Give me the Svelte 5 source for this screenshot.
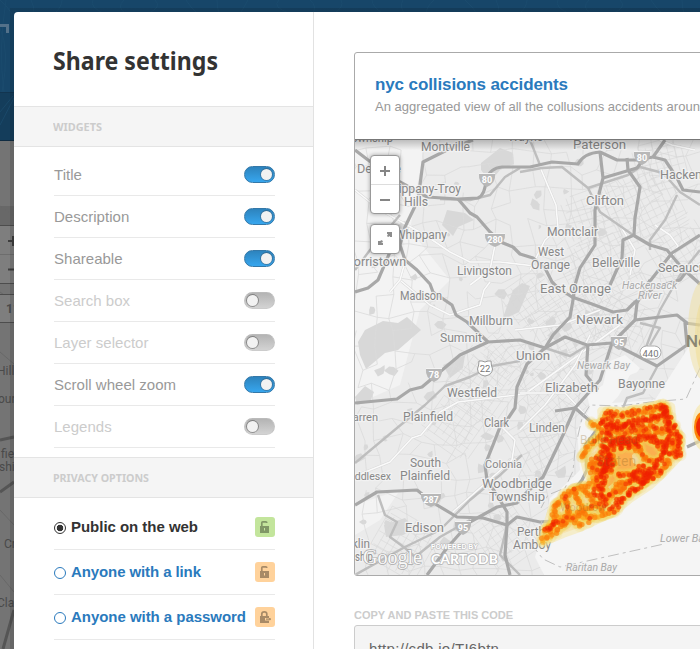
<script>
  const widgets = [
    { name: 'Title', on: true },
    { name: 'Description', on: true },
    { name: 'Shareable', on: true },
    { name: 'Search box', on: false },
    { name: 'Layer selector', on: false },
    { name: 'Scroll wheel zoom', on: true },
    { name: 'Legends', on: false }
  ];
  const options = [
    { name: 'Public on the web', width: 127, selected: true, color: '#c3e59c', lock: 'open' },
    { name: 'Anyone with a link', width: 130, selected: false, color: '#ffd29b', lock: 'open' },
    { name: 'Anyone with a password', width: 175, selected: false, color: '#ffd29b', lock: 'key' }
  ];

  // Small seeded generator so streets and accidents are the same on each load.
  let seed = 7;
  function rnd() {
    seed = (seed * 16807) % 2147483647;
    return seed / 2147483647;
  }

  function makeStreets() {
    const out = [];
    const cols = 21, rows = 26;
    const pts = [];
    for (let j = 0; j <= rows; j++) {
      pts.push([]);
      for (let i = 0; i <= cols; i++) {
        pts[j].push([348 + i * 18 + j * 0.8 + (rnd() - 0.5) * 13, 134 + j * 18 + (rnd() - 0.5) * 13]);
      }
    }
    for (let j = 0; j < rows; j++) {
      for (let i = 0; i < cols; i++) {
        const a = pts[j][i], b = pts[j][i + 1], c = pts[j + 1][i];
        if (rnd() < 0.78) out.push(`M${a[0].toFixed(1)} ${a[1].toFixed(1)}L${b[0].toFixed(1)} ${b[1].toFixed(1)}`);
        if (rnd() < 0.78) out.push(`M${a[0].toFixed(1)} ${a[1].toFixed(1)}L${c[0].toFixed(1)} ${c[1].toFixed(1)}`);
      }
    }
    return out.join('');
  }

  // Dense diagonal town grids: centre x, centre y, half size, angle.
  function makeGrids() {
    const towns = [
      [570, 330, 38, 60], [600, 270, 36, 62], [640, 205, 38, 64], [552, 395, 32, 48], [480, 385, 34, 35],
      [620, 325, 28, 28], [590, 215, 25, 70], [530, 300, 26, 55], [455, 425, 30, 35], [505, 535, 30, 55],
      [540, 445, 28, 60], [400, 545, 30, 30], [680, 250, 28, 58], [505, 355, 25, 50], [660, 165, 25, 75]
    ];
    const out = [];
    for (const [cx, cy, size, deg] of towns) {
      const r = (deg * Math.PI) / 180;
      for (const turn of [0, Math.PI / 2]) {
        const c = Math.cos(r + turn), s = Math.sin(r + turn);
        for (let k = -size; k <= size; k += 7) {
          const l = size * (0.5 + rnd() * 0.5);
          const x = cx - s * k, y = cy + c * k;
          out.push(`M${(x - c * l).toFixed(1)} ${(y - s * l).toFixed(1)}L${(x + c * l).toFixed(1)} ${(y + s * l).toFixed(1)}`);
        }
      }
    }
    return out.join('');
  }

  function makeWoods() {
    const out = [];
    for (let i = 0; i < 75; i++) {
      const x = 358 + rnd() * 250, y = 145 + rnd() * 425, r = 2 + rnd() * 4;
      const p = [];
      for (let k = 0; k < 6; k++) {
        const q = r * (0.5 + rnd());
        p.push(`${(x + Math.cos(k * 1.05) * q).toFixed(1)},${(y + Math.sin(k * 1.05) * q).toFixed(1)}`);
      }
      out.push(p.join(' '));
    }
    return out;
  }

  const streets = makeStreets();
  const grids = makeGrids();
  const woods = makeWoods();

  const highways = [
    'M473 140L447 150L423 162L421 177L418 200L405 227L400 245L405 260L417 270L430 284L433 292L452 305L456 315L467 322L488 342',
    'M355 150L368 160L400 182L427 197L458 199L478 198Q485 195 486 180Q490 168 502 167L530 167L552 162L578 164Q584 153 600 152L617 160L637 160L653 157L658 150L665 140',
    'M653 157L665 160L677 178L683 190L700 192',
    'M458 199L470 213L477 217L490 232L503 243L513 247L520 254L533 258L545 268L552 282L558 288L572 297L592 304L613 312L627 310L635 302L655 287L680 280L686 272',
    'M600 152L603 178L595 210L595 245L580 268L575 285L573 300L570 317L553 335L545 348L527 364L517 387L515 408L507 420L500 427L493 445L485 465L487 480L497 495L507 512L507 525L505 555L510 575',
    'M603 178L637 168L643 160',
    'M355 403L397 399L410 390L422 387L460 355L488 342L520 340L545 348L565 337L587 345L612 343L657 366L687 345L685 323L700 325',
    'M650 280L637 303L635 320L612 343L600 380L575 408L563 435L543 477L522 497L517 503L497 507L470 522L447 548L427 575',
    'M355 505L377 492L417 490L432 502L457 517L483 518L507 525L517 517L540 522L562 520',
    'M627 158L628 170L640 187L635 218L634 235L623 240L622 258L610 285',
    'M633 235L650 245L667 250L682 268L700 284',
    'M700 235L672 253L647 285',
    'M635 320L677 315L687 323',
    'M555 411L575 408L598 428L585 446L587 470L582 480L562 505',
    'M588 344L586 375L598 390',
    'M355 292L368 288L378 280L390 252L400 247',
    'M687 447L700 441'
  ];
  const roads = [
    'M520 172L542 168L562 167L588 188L600 212L633 235',
    'M588 188L628 175L640 167L663 173L680 192L700 205',
    'M520 168L505 177L490 195L470 200L440 199',
    'M520 361L492 366L470 377L445 386L425 405L397 428L355 463',
    'M378 495L385 515L397 522L390 537L405 548L415 557L440 537L470 520',
    'M355 575L405 547L440 530L470 500L500 475L522 455',
    'M657 367L643 393L627 398L623 408',
    'M677 195L665 220L650 240L650 250',
    'M507 525L500 555L520 575', 'M355 270L370 250L400 215',
    'M700 250L680 275L660 310L645 350', 'M640 323L660 328L650 345',
    'M545 348L570 356L588 345', 'M530 140L540 165'
  ];
  const whiteRoads = [
    'M355 190L380 210L425 235L450 252L470 262L500 262L535 266',
    'M401 281L430 305L450 315L480 305L484 290L490 282',
    'M355 476L390 462L412 438L421 435L440 412L458 402L525 394L620 325',
    'M500 425L515 440L512 460L455 510L450 515',
    'M540 167L556 205L558 228L545 240L530 270',
    'M405 262L400 280L390 292', 'M495 245L490 270L470 285',
    'M520 393L565 393L595 425', 'M590 335L575 365L545 405L520 430',
    'M515 330L560 325L600 310', 'M695 150L672 145L660 140',
    'M655 225L670 235L678 246L670 260', 'M620 225L635 250L630 275'
  ];

  const labels = [
    ['Township', 345, 142, 48], ['Montville', 421, 151, 49], ['Wayne', 508, 141, 35], ['Paterson', 573, 149, 53],
    ['Denville', 357, 173, 44], ['Parsippany-Troy', 374, 193, 87], ['Hills', 404, 206, 24], ['Whippany', 395, 239, 52],
    ['Morristown', 343, 266, 63], ['Livingston', 457, 275, 55], ['Hackensack', 660, 179, 68], ['Clifton', 586, 205, 38],
    ['Montclair', 547, 236, 51], ['West', 538, 256, 26], ['Orange', 531, 269, 39], ['Belleville', 592, 267, 48],
    ['Secaucus', 658, 272, 54], ['East Orange', 540, 293, 71], ['Madison', 400, 300, 42], ['Millburn', 469, 325, 44],
    ['Newark', 576, 324, 47, 13], ['Summit', 440, 342, 42], ['Union', 516, 360, 34], ['Westfield', 447, 397, 50],
    ['Elizabeth', 545, 392, 53], ['Bayonne', 618, 388, 47], ['Warren', 343, 421, 35, 11], ['Plainfield', 403, 421, 50],
    ['Clark', 484, 427, 25], ['Linden', 529, 432, 36], ['South', 410, 467, 31], ['Plainfield', 400, 480, 50],
    ['Middlesex', 343, 480, 48, 11], ['Colonia', 485, 468, 37, 11], ['Woodbridge', 482, 488, 70, 13], ['Township', 489, 501, 56, 13],
    ['Edison', 405, 532, 39], ['Perth', 517, 536, 28], ['Amboy', 513, 549, 38], ['Franklin', 329, 548, 41], ['ship', 355, 561, 18]
  ];
  const waterLabels = [
    ['Hackensack', 622, 289, 55], ['River', 638, 299, 24], ['Newark Bay', 577, 369, 53],
    ['Lower Bay', 660, 542, 49], ['Raritan Bay', 566, 571, 51]
  ];
  const interstates = [[487, 179, '80'], [642, 157, '80'], [495, 239, '280'], [434, 374, '78'], [619, 342, '95'], [431, 499, '287'], [463, 527, '95']];

  // Accident traces through the borough: half width, heat (1 to 3), vertices.
  const outline = [[245,48],[300,50],[380,38],[430,24],[452,35],[456,90],[484,140],[475,185],[430,233],[390,270],[330,310],[280,352],[235,372],[185,395],[130,415],[66,442],[78,405],[95,350],[135,300],[180,285],[225,265],[205,240],[192,188],[210,155],[245,110],[248,80]];
  const core = [[248,60],[450,35],[475,160],[400,235],[340,275],[260,330],[225,270],[215,200],[250,140]];
  const traces = [
    [7, 3, [[250,75],[300,90],[360,77],[430,65],[437,30]]],
    [7, 3, [[240,85],[290,95],[350,92]]],
    [8, 3, [[262,152],[310,132],[400,127],[430,155]]],
    [9, 3, [[268,105],[255,150],[262,200],[245,270],[247,310],[256,325]]],
    [9, 2, [[285,130],[265,220],[235,250],[225,300]]],
    [12, 2, [[225,180],[230,235],[260,240],[275,200],[250,160]]],
    [9, 3, [[240,170],[255,230],[270,180]]],
    [7, 3, [[425,30],[448,75],[475,125],[475,185]]],
    [8, 3, [[275,352],[305,310],[350,280],[400,225],[430,180],[445,120],[440,60]]],
    [14, 3, [[340,240],[365,260],[395,240],[370,220],[345,235],[375,245]]],
    [5, 2, [[290,240],[345,240],[310,280],[250,310]]],
    [7, 2, [[350,145],[380,195],[400,200]]],
    [5, 3, [[300,130],[305,165]]], [5, 3, [[325,130],[328,165]]], [7, 2, [[370,95],[400,145],[470,150]]],
    [8, 2, [[250,55],[310,60],[380,45],[435,35]]],
    [10, 2, [[260,110],[330,112],[390,105]]],
    [10, 2, [[400,60],[400,100],[440,110]]], [7, 2, [[420,165],[465,180]]],
    [9, 2, [[455,110],[465,150],[460,180]]],
    [8, 2, [[345,240],[370,255],[430,225],[450,190]]],
    [8, 2, [[290,130],[350,160],[350,145],[300,150]]],
    [6, 1, [[225,265],[170,280],[135,300],[100,340],[105,380],[75,410]]],
    [7, 1, [[65,440],[115,400],[180,350],[250,320]]],
    [5, 1, [[180,275],[215,310],[245,350]]], [4, 1, [[135,305],[150,365],[185,395]]],
    [4, 1, [[160,280],[190,350],[210,380]]], [4, 1, [[100,370],[150,365],[230,365],[280,350]]],
    [4, 1, [[210,80],[250,110],[205,155],[185,190]]], [6, 2, [[75,410],[105,380],[140,385]]],
    [5, 1, [[260,320],[290,270],[340,255]]], [8, 1, [[210,200],[230,270]]]
  ];
  const dots = { 1: [], 2: [], 3: [] };
  function makeDots() {
    for (const [spread, heat, pts] of traces) {
      for (let i = 0; i < pts.length - 1; i++) {
        const [ax, ay] = pts[i], [bx, by] = pts[i + 1];
        const n = Math.ceil(Math.hypot(bx - ax, by - ay) / 4.2);
        for (let k = 0; k < n; k++) {
          const t = (k + rnd()) / n;
          const x = 520 + (ax + (bx - ax) * t + (rnd() - 0.5) * spread * 2) / 3;
          const y = 395 + (ay + (by - ay) * t + (rnd() - 0.5) * spread * 2) / 3;
          dots[1].push([x, y]);
          if (heat > 1 || rnd() < 0.5) dots[2].push([x, y]);
          if (heat > 2 ? rnd() < 0.95 : heat > 1 ? rnd() < 0.35 : rnd() < 0.07) dots[3].push([x, y]);
        }
      }
    }
  }
  makeDots();
  const toPage = (p) => p.map(([x, y]) => `${(520 + x / 3).toFixed(1)},${(395 + y / 3).toFixed(1)}`).join(' ');
</script>

<div class="page">
  <svg class="backdrop" width="700" height="649" viewBox="0 0 700 649">
    <defs>
      <linearGradient id="edge" x1="0" x2="1"><stop offset="0" stop-color="#000" stop-opacity="0.12" /><stop offset="1" stop-color="#000" stop-opacity="0.16" /></linearGradient>
    </defs>
    <rect width="700" height="649" fill="#747474" />
    <rect width="700" height="92" fill="#174669" />
    <rect y="92" width="14" height="49" fill="#143d5b" />
    <path d="M0 92.5H14" stroke="#123550" /><path d="M0 140.5H14" stroke="#102c42" />
    <g fill="none" stroke="#1d4e70" opacity="0.7">
      {#each Array(24) as _, i}
        <path d="M{i * 31} 0q{8 - i % 5 * 4} 7 {12 - i % 3 * 10} 14" />
      {/each}
      <path d="M0 28Q10 50 2 92M0 125L14 98M0 112L13 96M6 0Q-2 50 4 92" />
    </g>
    <path d="M0 25.5H7.5V33" fill="none" stroke="#53718a" stroke-width="3" />
    <rect y="206" width="14" height="19" fill="#686868" />
    <path d="M0 206L14 216M0 292L14 302M0 352L14 364M0 510L14 525M0 575L14 592" stroke="#686868" />
    <path d="M0 440L14 437M0 492L14 482M3 649L14 610" stroke="#555" stroke-width="3" />
    <rect x="-6" y="225.5" width="24" height="58" fill="#7e7e7e" stroke="#4d4d4d" />
    <rect x="-6" y="294.5" width="24" height="28" fill="#7e7e7e" stroke="#4d4d4d" />
    <path d="M0 254.5H14" stroke="#6d6d6d" /><path d="M8 241H16M13 236V246M8 269.5H16" stroke="#3d3d3d" stroke-width="2" />
    <g font-family="Roboto, sans-serif" font-size="12" fill="#4a4a4a">
      <text x="-3" y="375">Hills</text><text x="-2" y="403">ourne</text><text x="1" y="458">field</text><text x="-1" y="471">ship</text>
      <text x="4" y="548">Cranford</text><text x="-3" y="607">Clark</text><text x="6" y="313" font-weight="bold">11</text>
    </g>
    <rect x="10" y="8" width="690" height="641" fill="url(#edge)" />
  </svg>

  <div class="modal">
    <aside>
      <h1><svg width="190" height="40"><text x="0" y="28" textLength="165" lengthAdjust="spacingAndGlyphs">Share settings</text></svg></h1>
      <h2><svg width="120" height="20"><text x="0" y="14" textLength="49" lengthAdjust="spacingAndGlyphs">WIDGETS</text></svg></h2>
      <ul class="widgets">
        {#each widgets as w}
          <li class:off={!w.on}><span>{w.name}</span><i class="toggle"><b></b></i></li>
        {/each}
      </ul>
      <h2><svg width="120" height="20"><text x="0" y="14" textLength="96" lengthAdjust="spacingAndGlyphs">PRIVACY OPTIONS</text></svg></h2>
      <ul class="privacy">
        {#each options as o}
          <li class:selected={o.selected}>
            <i class="radio"></i>
            <svg class="name" width="184" height="24"><text x="0" y="17" textLength={o.width}>{o.name}</text></svg>
            <i class="badge" style="background:{o.color}">
              <svg width="20" height="20" viewBox="0 0 20 20" fill="none" stroke="#000" stroke-opacity="0.34">
                {#if o.lock === 'open'}
                  <path d="M6.8 9V5.8Q6.8 4.8 7.8 4.8H10.8Q11.8 4.8 11.8 6" stroke-width="1.7" />
                  <path d="M5 9H14V16H5ZM9 11V13.5H10V11Z" fill="#000" fill-opacity="0.34" stroke="none" fill-rule="evenodd" />
                {:else}
                  <path d="M6.8 9V7Q6.8 4.8 9.3 4.8Q11.8 4.8 11.8 7V9" stroke-width="1.7" />
                  <path d="M5 9H14V11H10V13.5H14V16H5Z" fill="#000" fill-opacity="0.34" stroke="none" />
                  <path d="M11 12.2H16M14.7 11V13.3" stroke-width="1.2" />
                {/if}
              </svg>
            </i>
          </li>
        {/each}
      </ul>
    </aside>

    <main>
      <section class="card">
        <header>
          <h3>nyc collisions accidents</h3>
          <p>An aggregated view of all the collusions accidents around New York</p>
        </header>
        <div class="map">
          <svg width="345" height="435" viewBox="355 140 345 435" stroke-linejoin="round">
            <defs>
              <linearGradient id="shade" x1="0" y1="0" x2="0" y2="1"><stop offset="0" stop-color="#000" stop-opacity="0.22" /><stop offset="1" stop-color="#000" stop-opacity="0" /></linearGradient>
            </defs>
            <rect x="355" y="140" width="345" height="435" fill="#ebebeb" />
            <path d="M355 140H425L410 230L450 280L420 310L400 385L355 405ZM355 505L400 490L380 520L355 535Z" fill="#f3f3f3" />
            <g fill="#d8d8d8">
              {#each woods as w}<polygon points={w} />{/each}
              <path d="M358 342L365 330L383 321L398 323L407 317L421 330L398 350L385 353L366 369L360 355Z" />
              <path d="M481 163L500 148L513 153L514 164L500 170L490 182L481 170Z" />
              <path d="M447 210L465 213L474 220L458 227L453 236L442 225Z" />
              <path d="M502 320L513 290L522 283L530 286L519 312Z" />
              <path d="M443 365L465 355L463 368L450 378Z" />
              <path d="M384 525L405 518L415 529L403 535L386 537Z" />
              <path d="M355 397L365 386L374 392L370 402L357 405Z" />
            </g>
            <path d={streets} stroke="#dadada" stroke-width="0.8" fill="none" />
            <path d={grids} stroke="#d7d7d7" stroke-width="0.6" fill="none" />
            <path d="M544 575L535 557L540 540L545 525L550 498L568 482L580 470L577 430L590 408L587 395L603 385L608 362L625 355L640 368L628 386L612 403L655 400L672 373L690 345L700 340V575Z" fill="#f5f5f5" />
            <path d="M618 397L630 375L650 367L665 370L655 392L630 402Z" fill="#ebebeb" />
            <g fill="none">
              {#each whiteRoads as d}<path {d} stroke="#d8d8d8" stroke-width="2.5" /><path {d} stroke="#fafafa" stroke-width="1.6" />{/each}
            </g>
            <g fill="none" stroke="#bebebe" stroke-width="2.4">
              {#each roads as d}<path {d} />{/each}
            </g>
            <g fill="none" stroke="#a8a8a8" stroke-width="3.2">
              {#each highways as d}<path {d} />{/each}
            </g>
            <path d="M700 368L686 399L650 402L620 406L590 405L582 418L577 440M575 450L573 471L565 488L548 495L541 508M542 520L536 550L543 559L560 567L664 544" fill="none" stroke="#c0c0c0" stroke-width="1" stroke-dasharray="11 4 3 4" />

            <g class="place">
              {#each labels as [t, x, y, w, s]}
                <text {x} {y} textLength={w} lengthAdjust="spacingAndGlyphs" font-size={s ?? 12}>{t}</text>
              {/each}
            </g>
            <g class="place water">
              {#each waterLabels as [t, x, y, w]}
                <text {x} {y} textLength={w} lengthAdjust="spacingAndGlyphs" font-size="10.5">{t}</text>
              {/each}
            </g>
            {#each interstates as [x, y, n]}
              <g transform="translate({x} {y})">
                <path d="M{-4 - n.length * 2} -5H{4 + n.length * 2}Q{5 + n.length * 2} 4 0 8Q{-5 - n.length * 2} 4 {-4 - n.length * 2} -5Z" fill="#b8b8b8" />
                <path d="M{-4 - n.length * 2} -5.5H{4 + n.length * 2}" stroke="#f4f4f4" />
                <text y="4" class="shield">{n}</text>
              </g>
            {/each}
            <path d="M479 361L482 361Q485 363 488 361L491 361Q491 365 492.500 369Q492 375 485 376Q478 375 477.500 369Q479 365 479 361Z" fill="#fff" stroke="#999" />
            <text x="485" y="372" class="number">22</text>
            <rect x="640" y="346" width="21" height="13" rx="6.5" fill="#fff" stroke="#aaa" />
            <text x="650.5" y="356.5" class="number">440</text>

            <polygon points={toPage(outline)} fill="#f9c05b" fill-opacity="0.35" stroke="#f5e6a0" stroke-opacity="0.5" stroke-width="9" />
            <polygon points={toPage(core)} fill="#fd9a1f" fill-opacity="0.7" />
            <path d="M632 455L639 449L644 453L649 462L640 466L633 463ZM608 487L619 479L633 481L626 490L612 493Z" fill="#f0dfa6" fill-opacity="0.9" />
            <g fill="#f5d25a" fill-opacity="0.16">{#each dots[1] as [x, y]}<circle cx={x} cy={y} r="6" />{/each}</g>
            <g fill="#fcab20" fill-opacity="0.6">{#each dots[1] as [x, y]}<circle cx={x} cy={y} r="2.5" />{/each}</g>
            <g fill="#fb6f08" fill-opacity="0.42">{#each dots[2] as [x, y]}<circle cx={x} cy={y} r="2.7" />{/each}</g>
            <g fill="#ef2103" fill-opacity="0.46">{#each dots[3] as [x, y]}<circle cx={x} cy={y} r="2.3" />{/each}</g>
            <g class="town">
              <text x="580" y="444">Bulls Head</text><text x="596" y="466" font-size="14">Staten</text><text x="560" y="511" font-size="11">Woodrow</text>
            </g>
            <ellipse cx="704" cy="330" rx="16" ry="50" fill="#f0dfa0" fill-opacity="0.5" />
            <ellipse cx="705" cy="337" rx="10" ry="38" fill="#f2d779" fill-opacity="0.35" />
            <text x="686" y="347" textLength="72" font-size="17" class="city">New York</text>
            <ellipse cx="704" cy="427" rx="12" ry="24" fill="#f6e6a2" fill-opacity="0.6" />
            <ellipse cx="702" cy="427" rx="8" ry="15" fill="#fb8508" /><ellipse cx="703" cy="427" rx="7" ry="11" fill="#ee2b04" />

            <text x="363" y="564" class="google">Google</text>
            <text x="431" y="549" class="powered" textLength="47">POWERED BY</text>
            <text x="431" y="564" class="carto" textLength="67" lengthAdjust="spacingAndGlyphs">CARTODB</text>
            <rect x="355" y="140" width="345" height="10" fill="url(#shade)" />
          </svg>
          <div class="controls">
            <div class="zoom">
              <svg width="28" height="57" viewBox="0 0 28 57"><path d="M9 15H19M14 10V20M9 44H19" stroke="#858585" stroke-width="2" /><path d="M0 28.5H28" stroke="#ddd" /></svg>
            </div>
            <div class="full">
              <svg width="28" height="28" viewBox="0 0 28 28" fill="#8d8d8d"><path d="M16 7H21V12H19V11L17 12L16 11L17 9H16ZM7 16H9L11 15L12 17L10 18H12V20H7Z" /></svg>
            </div>
          </div>
        </div>
      </section>
      <h4><svg width="200" height="16"><text x="0" y="13" textLength="159" lengthAdjust="spacingAndGlyphs">COPY AND PASTE THIS CODE</text></svg></h4>
      <div class="code">http://cdb.io/TI6btn</div>
    </main>
  </div>
</div>

<style>
  .page { position: relative; width: 700px; height: 649px; overflow: hidden; font-family: "Liberation Sans", Arial, sans-serif; }
  .page :is(h1, h2, h3, h4, p, ul) { margin: 0; padding: 0; }
  svg { display: block; }
  i { font-style: normal; }
  .backdrop { position: absolute; left: 0; top: 0; }
  .modal { position: relative; display: flex; box-sizing: border-box; width: 720px; height: 660px; margin: 12px 0 0 14px; background: #fff; border-radius: 4px 0 0 0; overflow: hidden; }
  aside { box-sizing: border-box; flex: 0 0 300px; border-right: 1px solid #e2e2e2; }
  h1 { height: 94px; display: flex; align-items: center; padding-left: 39px !important; box-sizing: border-box; padding-top: 6px !important; }
  h1 text { font: bold 25px "Noto Sans", sans-serif; fill: #333; }
  h2 { box-sizing: border-box; height: 41px; border: solid #e4e4e4; border-width: 1px 0; background: #f5f5f5; padding: 10px 0 0 39px !important; }
  h2 text { font: bold 11px "Noto Sans", sans-serif; fill: #ccc; }
  ul { list-style: none; }
  li { display: flex; align-items: center; box-sizing: border-box; border-bottom: 1px solid #e9e9e9; }
  .page .widgets { padding: 7px 38px 9px 40px; }
  .widgets li { height: 42px; justify-content: space-between; font-size: 15px; letter-spacing: 0.02px; color: #999; }
  .widgets .off { color: #ccc; }
  .toggle { box-sizing: border-box; display: flex; justify-content: flex-end; width: 31px; height: 17px; padding: 2px; border: 1px solid #3478a8; border-radius: 9px; background: linear-gradient(#2d83bd, #37a6ee); }
  .toggle b { box-sizing: border-box; width: 11px; height: 11px; border-radius: 50%; background: #f2f2f2; box-shadow: 0 0 0 1px rgba(60, 80, 100, 0.45); }
  .off .toggle { justify-content: flex-start; border-color: #bbb #c5c5c5 #ccc; background: linear-gradient(#b4b4b4, #d3d3d3); }
  .off .toggle b { box-shadow: 0 0 0 1px rgba(0, 0, 0, 0.3); }
  .page .privacy { padding: 7px 38px 0 40px; }
  .privacy li { height: 45px; color: #2a7abd; font-weight: bold; font-size: 15px; }
  .privacy .selected { color: #333; }
  .name { fill: currentColor; flex: 1; min-width: 0; }
  .radio { box-sizing: border-box; width: 12px; height: 12px; margin: 2px 5px 0 0; border: 1px solid currentColor; border-radius: 50%; }
  .selected .radio { background: radial-gradient(circle, currentColor 0 3px, transparent 3.6px); }
  .badge { width: 20px; height: 20px; border-radius: 3px; }
  main { flex: 1; padding: 40px 0 0 40px; min-width: 0; }
  .card { box-sizing: border-box; width: 380px; height: 524px; border: 1px solid #aaa; border-radius: 3px; overflow: hidden; }
  header { box-sizing: border-box; height: 87px; padding: 21px 0 0 20px; border-bottom: 1px solid #777; overflow: hidden; white-space: nowrap; }
  h3 { color: #2a7abd; font-size: 17px; line-height: 22px; letter-spacing: -0.11px; }
  p { color: #999; font-size: 13px; line-height: 22px; letter-spacing: 0.02px; }
  .map { position: relative; }
  .place { font-family: Roboto, sans-serif; fill: #888; stroke: #f4f4f4; stroke-width: 2.5px; stroke-opacity: 0.85; paint-order: stroke; }
  .water { fill: #aaa; font-style: italic; }
  .city { font-family: Roboto, sans-serif; font-weight: 500; fill: #8a8674; }
  .shield { font: bold 9px Roboto, sans-serif; fill: #fff; text-anchor: middle; }
  .number { font: 9.5px Roboto, sans-serif; fill: #777; text-anchor: middle; }
  .town { font-family: Roboto, sans-serif; font-size: 12px; fill: #876020; fill-opacity: 0.28; }
  .google { font: 20px "Liberation Serif", serif; fill: #f8f8f8; stroke: #aaa; stroke-width: 1.4px; paint-order: stroke; }
  .powered { font: bold 7px "Liberation Sans", sans-serif; fill: #fff; stroke: #bbb; stroke-width: 1.2px; paint-order: stroke; }
  .carto { font: bold 14px Lato, sans-serif; fill: #fff; stroke: #bbb; stroke-width: 1.8px; paint-order: stroke; }
  .controls { position: absolute; left: 15px; top: 15px; display: flex; flex-direction: column; gap: 10px; }
  .zoom, .full { background: #fff; border: 1px solid #999; border-radius: 4px; box-shadow: 0 0 4px rgba(0, 0, 0, 0.35); }
  h4 { height: 16px; padding-top: 30px !important; }
  h4 text { font: bold 11px "Liberation Sans", sans-serif; fill: #ccc; }
  .code { box-sizing: border-box; width: 380px; height: 60px; margin-top: 3px; padding: 14px; background: #f4f4f4; border: 1px solid #ccc; border-radius: 3px; color: #666; font-size: 15px; line-height: 17px; letter-spacing: 0.3px; }
</style>
